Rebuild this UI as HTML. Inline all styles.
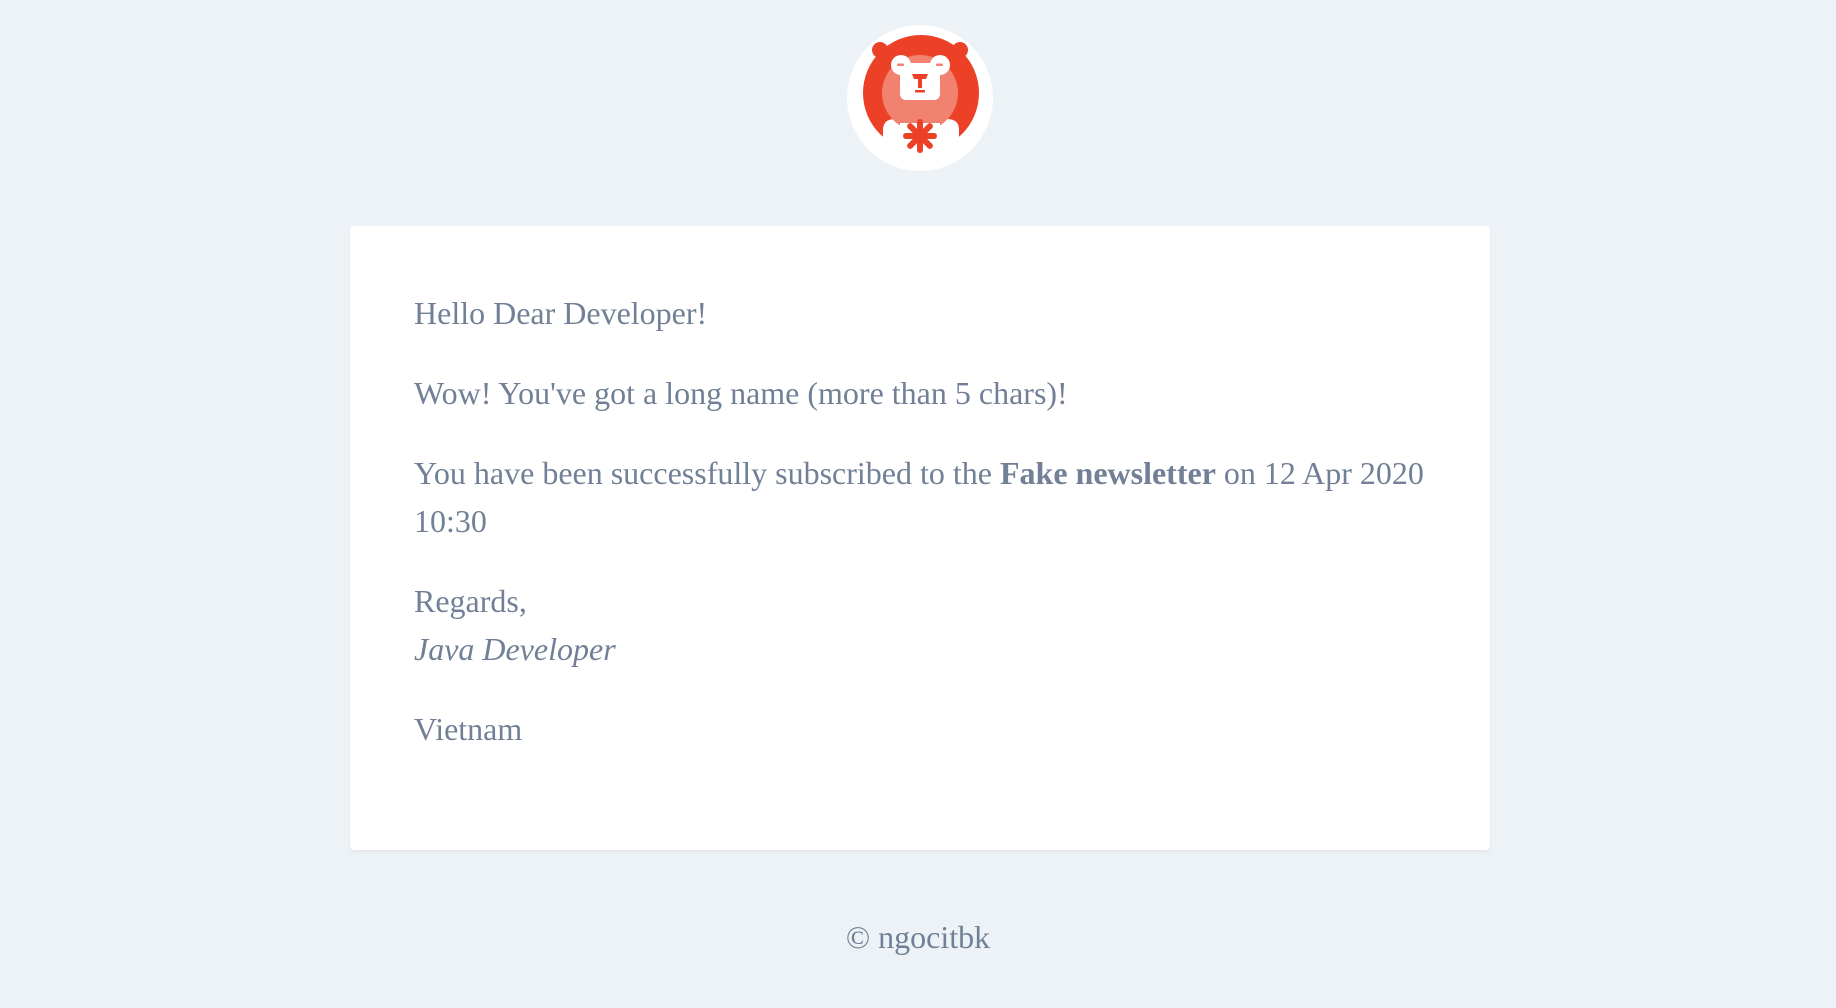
<!DOCTYPE html>
<html><head><meta charset="utf-8"><style>
html,body{margin:0;padding:0;background:#edf2f7;width:1836px;height:1008px;overflow:hidden}
body{font-family:"Liberation Serif",serif;color:#718096}
.logo{position:absolute;left:847px;top:25px;width:146px;height:146px}
.card{position:absolute;left:350px;top:226px;width:1140px;height:624px;background:#fff;border-radius:4px;box-shadow:0 2px 3px rgba(0,0,0,0.06);box-sizing:border-box;padding:63px 64px 0 64px}
.card p{margin:0 0 32px 0;font-size:32px;line-height:48px;white-space:nowrap}
.foot{position:absolute;left:0;width:1836px;top:913px;text-align:center;font-size:32px;line-height:48px}
</style></head><body>
<svg class="logo" viewBox="7 7 146 146">
<circle cx="80" cy="80" r="73" fill="#fff"/>
<defs><clipPath id="c"><circle cx="80" cy="80" r="72"/></clipPath></defs>
<g clip-path="url(#c)">
<circle cx="40" cy="32" r="8" fill="#ec4027"/>
<circle cx="120" cy="32" r="8" fill="#ec4027"/>
<circle cx="81" cy="75" r="58" fill="#ec4027"/>
<path d="M43 160 V112 Q43 101 55 101 H107 Q119 101 119 112 V160 Z" fill="#fff"/>
<circle cx="80" cy="75" r="38" fill="#f0826f"/>
<path d="M60 105 H100 V160 H60 Z" fill="#fff"/>
<circle cx="61" cy="47" r="10" fill="#fff"/>
<circle cx="100" cy="47" r="10" fill="#fff"/>
<rect x="60" y="45" width="40" height="37" rx="6" fill="#fff"/>
<rect x="57" y="45.5" width="7" height="2.5" rx="1" fill="#f0826f"/>
<rect x="96" y="45.5" width="7" height="2.5" rx="1" fill="#f0826f"/>
<path d="M72 56 H88 L86 61 H82 V70 H78 V61 H74 Z" fill="#ec4027"/>
<rect x="75" y="72" width="10" height="2.5" fill="#ec4027"/>
<g fill="#ec4027" transform="translate(80 118)">
<rect x="-3" y="-17" width="6" height="34" rx="3"/>
<rect x="-3" y="-17" width="6" height="34" rx="3" transform="rotate(45)"/>
<rect x="-3" y="-17" width="6" height="34" rx="3" transform="rotate(90)"/>
<rect x="-3" y="-17" width="6" height="34" rx="3" transform="rotate(135)"/>
<circle r="7"/>
</g>
</g>
</svg>
<div class="card">
<p>Hello Dear Developer!</p>
<p>Wow! You've got a long name (more than 5 chars)!</p>
<p>You have been successfully subscribed to the <b>Fake newsletter</b> on 12 Apr 2020<br>10:30</p>
<p style="margin-bottom:0">Regards,</p>
<p><i>Java Developer</i></p>
<p>Vietnam</p>
</div>
<div class="foot">© ngocitbk</div>
</body></html>
